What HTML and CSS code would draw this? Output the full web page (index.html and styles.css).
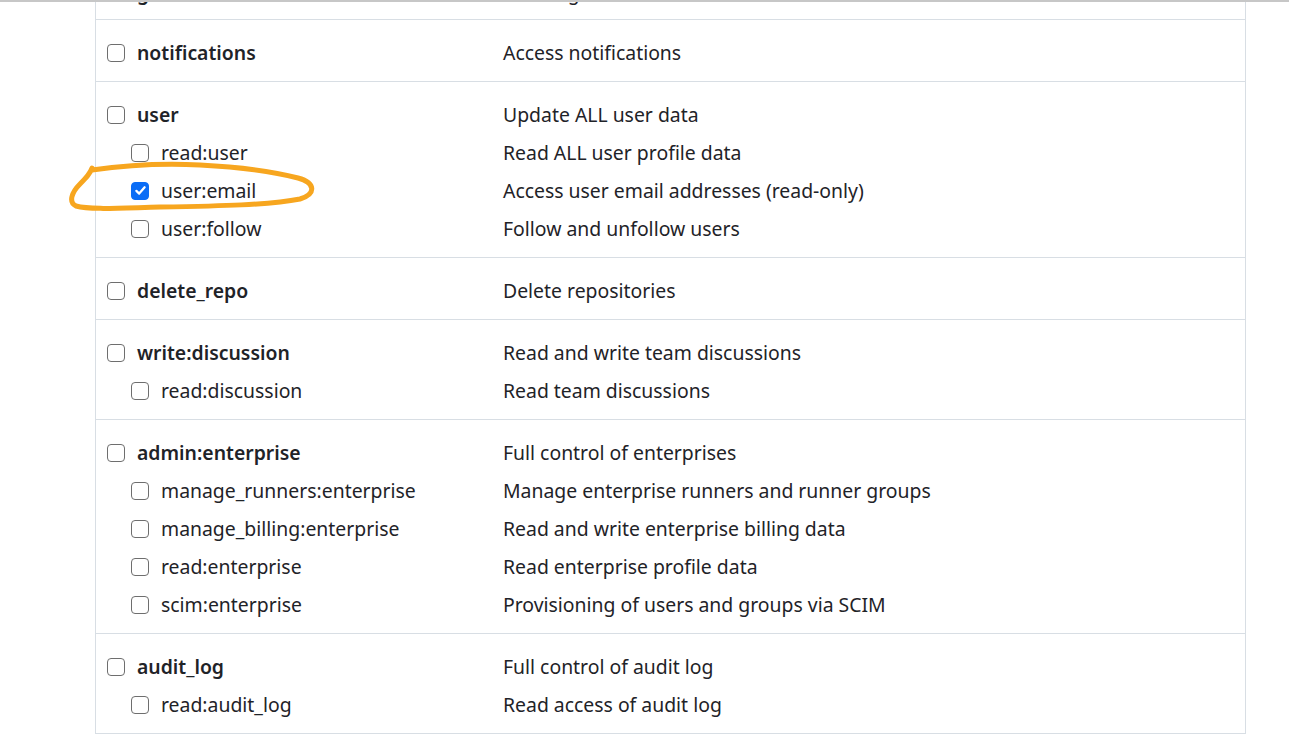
FILE: index.html
```html
<!DOCTYPE html>
<html lang="en">
<head>
<meta charset="utf-8">
<title>Token scopes</title>
<link rel="stylesheet" href="styles.css">
</head>
<body>
<div class="scopes">
  <div class="group first">
    <div class="line"><label class="scope top"><input type="checkbox"><span>gist</span></label><span class="desc">Create gists</span></div>
  </div>
  <div class="group">
    <div class="line"><label class="scope top"><input type="checkbox"><span>notifications</span></label><span class="desc">Access notifications</span></div>
  </div>
  <div class="group">
    <div class="line"><label class="scope top"><input type="checkbox"><span>user</span></label><span class="desc">Update ALL user data</span></div>
    <div class="line"><label class="scope sub"><input type="checkbox"><span>read:user</span></label><span class="desc">Read ALL user profile data</span></div>
    <div class="line"><label class="scope sub"><input type="checkbox" checked><span>user:email</span></label><span class="desc">Access user email addresses (read-only)</span></div>
    <div class="line"><label class="scope sub"><input type="checkbox"><span>user:follow</span></label><span class="desc">Follow and unfollow users</span></div>
  </div>
  <div class="group">
    <div class="line"><label class="scope top"><input type="checkbox"><span>delete_repo</span></label><span class="desc">Delete repositories</span></div>
  </div>
  <div class="group">
    <div class="line"><label class="scope top"><input type="checkbox"><span>write:discussion</span></label><span class="desc">Read and write team discussions</span></div>
    <div class="line"><label class="scope sub"><input type="checkbox"><span>read:discussion</span></label><span class="desc">Read team discussions</span></div>
  </div>
  <div class="group">
    <div class="line"><label class="scope top"><input type="checkbox"><span>admin:enterprise</span></label><span class="desc">Full control of enterprises</span></div>
    <div class="line"><label class="scope sub"><input type="checkbox"><span>manage_runners:enterprise</span></label><span class="desc">Manage enterprise runners and runner groups</span></div>
    <div class="line"><label class="scope sub"><input type="checkbox"><span>manage_billing:enterprise</span></label><span class="desc">Read and write enterprise billing data</span></div>
    <div class="line"><label class="scope sub"><input type="checkbox"><span>read:enterprise</span></label><span class="desc">Read enterprise profile data</span></div>
    <div class="line"><label class="scope sub"><input type="checkbox"><span>scim:enterprise</span></label><span class="desc">Provisioning of users and groups via SCIM</span></div>
  </div>
  <div class="group">
    <div class="line"><label class="scope top"><input type="checkbox"><span>audit_log</span></label><span class="desc">Full control of audit log</span></div>
    <div class="line"><label class="scope sub"><input type="checkbox"><span>read:audit_log</span></label><span class="desc">Read access of audit log</span></div>
  </div>
</div>
<svg class="annotation" width="1289" height="734" viewBox="0 0 1289 734" aria-hidden="true">
  <path d="M92 170 C 120 166, 160 163, 200 165 C 240 167, 275 172, 298 178 C 316 183, 316 194, 300 199 C 270 205, 220 206, 160 207 C 120 208, 90 210, 76 206 C 68 202, 72 192, 80 184 C 86 178, 90 174, 92 168"/>
</svg>
</body>
</html>
```
FILE: styles.css
```css
html, body {
  margin: 0;
  padding: 0;
  background: #ffffff;
}
body {
  border-top: 2px solid #c7c7c7;
  font-family: "Noto Sans", "Open Sans", sans-serif;
  color: #1f2328;
  font-size: 19.4px;
  height: 732px;
  overflow: hidden;
  position: relative;
}
.scopes {
  margin-top: -44px;
  margin-left: 95px;
  width: 1149px;
  border-left: 1px solid #d8dee4;
  border-right: 1px solid #d8dee4;
  min-height: 800px;
}
.group {
  padding: 13.5px 0 9.5px;
  border-bottom: 1px solid #d8dee4;
}
.group.first {
  padding: 15px 0 8px;
}
.line {
  display: flex;
  align-items: center;
  height: 38px;
}
.scope {
  width: 407px;
  flex: none;
  display: flex;
  align-items: center;
  gap: 12px;
  box-sizing: border-box;
  padding-left: 11px;
}
.scope.sub {
  padding-left: 35px;
  font-weight: 400;
}
.scope.top {
  font-weight: 600;
}
.scope input {
  -webkit-appearance: none;
  appearance: none;
  box-sizing: border-box;
  width: 18px;
  height: 18px;
  margin: 0;
  flex: none;
  border: 1.5px solid #6e6e6e;
  border-radius: 4px;
  background: #ffffff;
}
.scope input:checked {
  border-color: #0b6df6;
  background: #0b6df6 url("data:image/svg+xml,%3Csvg xmlns='http://www.w3.org/2000/svg' viewBox='0 0 16 16'%3E%3Cpath d='M3.6 8.4 L6.6 11.3 L12.4 4.6' fill='none' stroke='white' stroke-width='2.4' stroke-linecap='round' stroke-linejoin='round'/%3E%3C/svg%3E") center / 15px 15px no-repeat;
}
.desc {
  color: #1f2328;
}
.annotation {
  position: absolute;
  left: 0;
  top: -2px;
  pointer-events: none;
}
.annotation path {
  fill: none;
  stroke: #f7a61f;
  stroke-width: 5;
  stroke-linecap: round;
  stroke-linejoin: round;
}
```
